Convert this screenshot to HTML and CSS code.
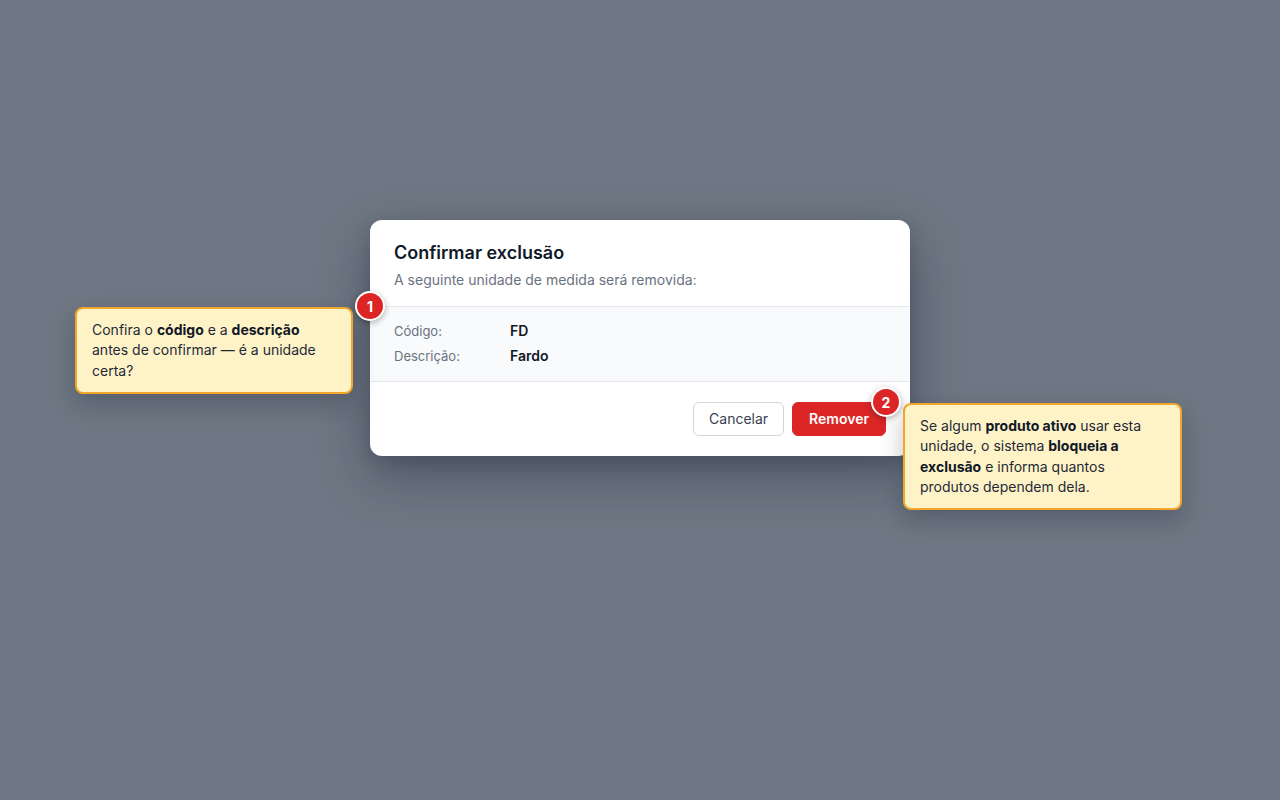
FILE: index.html
```html
<!DOCTYPE html>
<html lang="pt-BR">
<head>
<meta charset="utf-8">
<title>Confirmar exclusão</title>
<link rel="stylesheet" href="styles.css">
</head>
<body>
<main class="stage">
  <section class="dialog">
    <header class="dialog-head">
      <h2 class="title">Confirmar exclusão</h2>
      <p class="subtitle">A seguinte unidade de medida será removida:</p>
    </header>
    <div class="details">
      <div class="row"><span class="label">Código:</span><span class="value">FD</span></div>
      <div class="row"><span class="label">Descrição:</span><span class="value">Fardo</span></div>
    </div>
    <footer class="dialog-foot">
      <button class="btn btn-cancel">Cancelar</button>
      <button class="btn btn-danger">Remover</button>
    </footer>

    <span class="badge badge-1">1</span>
    <div class="note note-1">Confira o <b>código</b> e a <b>descrição</b> antes de confirmar — é a unidade certa?</div>
    <span class="badge badge-2">2</span>
    <div class="note note-2">Se algum <b>produto ativo</b> usar esta unidade, o sistema <b>bloqueia a exclusão</b> e informa quantos produtos dependem dela.</div>
  </section>
</main>
</body>
</html>
```

FILE: styles.css
```css
* { box-sizing: border-box; }
html, body { margin: 0; height: 100%; }
body {
  background: #6e7783;
  font-family: Inter, "Noto Sans", "Liberation Sans", sans-serif;
  color: #111827;
}
.stage {
  min-height: 800px;
  display: flex;
  justify-content: center;
  align-items: flex-start;
  padding-top: 220px;
}
.dialog {
  position: relative;
  width: 540px;
  background: #ffffff;
  border-radius: 12px;
  box-shadow: 0 20px 50px rgba(17, 24, 39, 0.35), 0 6px 16px rgba(17, 24, 39, 0.15);
}
.dialog-head { padding: 20px 24px 16px; }
.title {
  margin: 0;
  font-size: 18px;
  line-height: 26px;
  font-weight: 600;
  color: #111827;
}
.subtitle {
  margin: 4px 0 0;
  font-size: 14px;
  line-height: 20px;
  color: #6b7280;
}
.details {
  background: #f9fafb;
  border-top: 1px solid #e5e7eb;
  border-bottom: 1px solid #e5e7eb;
  padding: 14px 24px 15px;
  display: flex;
  flex-direction: column;
  gap: 5px;
}
.row { display: flex; line-height: 20px; }
.label { width: 116px; font-size: 13px; color: #6b7280; }
.value { font-size: 14px; font-weight: 600; color: #111827; }
.dialog-foot {
  display: flex;
  justify-content: flex-end;
  gap: 8px;
  padding: 20px 24px;
}
.btn {
  height: 34px;
  padding: 0 16px;
  border-radius: 6px;
  font-family: inherit;
  font-size: 14px;
  line-height: 20px;
}
.btn-cancel {
  padding: 0 15px;
  background: #ffffff;
  border: 1px solid #d1d5db;
  color: #374151;
}
.btn-danger {
  background: #dc2626;
  border: 1px solid #dc2626;
  color: #ffffff;
  font-weight: 600;
}
.badge {
  position: absolute;
  width: 30px;
  height: 30px;
  border-radius: 50%;
  background: #dc2626;
  border: 2px solid #ffffff;
  color: #ffffff;
  font-size: 14px;
  font-weight: 700;
  display: flex;
  align-items: center;
  justify-content: center;
  box-shadow: 0 2px 6px rgba(0, 0, 0, 0.3);
  z-index: 2;
}
.badge-1 { left: -15px; top: 71px; }
.badge-2 { left: 501px; top: 167px; }
.note {
  position: absolute;
  background: #fef3c7;
  border: 2px solid #f2a72a;
  border-radius: 8px;
  padding: 11px 15px;
  font-size: 14px;
  line-height: 20.3px;
  color: #1f2937;
  box-shadow: 0 10px 25px rgba(17, 24, 39, 0.25);
  z-index: 1;
}
.note b { font-weight: 700; color: #111827; }
.note-1 { left: -295px; top: 87px; width: 278px; }
.note-2 { left: 533px; top: 183px; width: 279px; }
```
